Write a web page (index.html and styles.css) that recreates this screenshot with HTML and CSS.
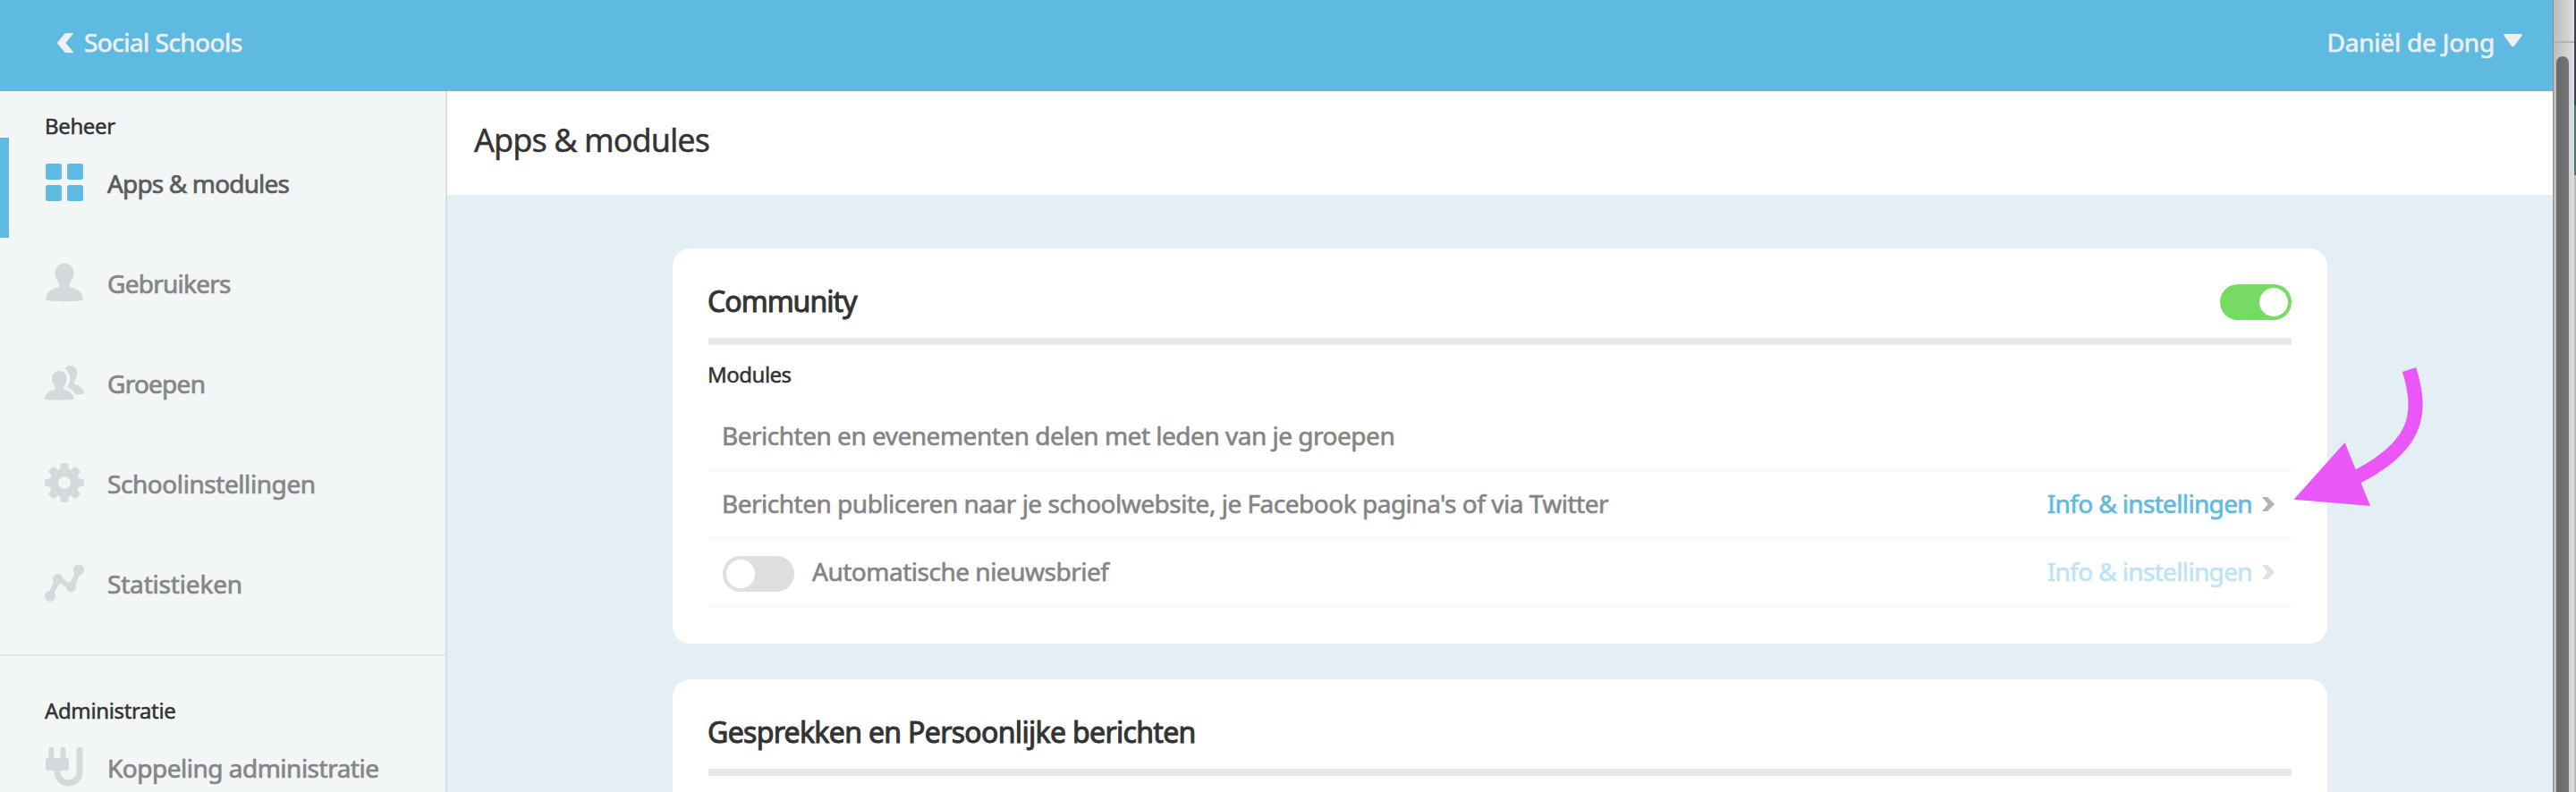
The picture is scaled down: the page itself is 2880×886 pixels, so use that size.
FILE: index.html
```
<!DOCTYPE html>
<html lang="nl">
<head>
  <meta charset="UTF-8">
  <title>Apps &amp; modules - Social Schools</title>
  <link rel="stylesheet" href="styles.css">
</head>
<body>

<div class="screen">
<div class="window">
  <!-- Top bar -->
  <header class="topbar">
    <a class="back">
      <svg class="back-icon" width="18" height="22" viewBox="0 0 18 22"><path d="M10 0h7.500q1 0 .3.800L9.500 11l8.500 10.200q.5.800-.5.800H10Q9 22 8 21L.5 12q-.8-1 0-2L8 1q1-1 2-1z"/></svg>
      <span class="back-text">Social Schools</span>
    </a>
    <div class="user">
      <span class="user-name">Daniël de Jong</span>
      <svg class="user-caret" width="21" height="15" viewBox="0 0 21 15"><path d="M1.500 0h18q1.800.6.8 2L12 13.500q-1.500 1.500-3 0L.5 2Q-.3.600 1.500 0z"/></svg>
    </div>
  </header>

  <div class="body">
    <!-- Sidebar -->
    <nav class="sidebar">
      <h3 class="group-title beheer">Beheer</h3>
      <a class="item active">
        <svg class="item-icon" width="44" height="44" viewBox="0 0 44 44">
          <rect x="1" y="1" width="18" height="18" rx="3"/><rect x="25" y="1" width="18" height="18" rx="3"/>
          <rect x="1" y="25" width="18" height="18" rx="3"/><rect x="25" y="25" width="18" height="18" rx="3"/>
        </svg>
        <span class="t-apps">Apps &amp; modules</span>
      </a>
      <a class="item">
        <svg class="item-icon" width="44" height="44" viewBox="0 0 44 44"><path d="M22 .5c6 0 10.300 4.500 10.300 10.500 0 5-2 8.500-4 11.500-1.500 2.500-1.300 3.800.7 4.800 6.500 2 12.500 4.700 13.800 12.200.3 2-.3 2.500-2.300 2.800-10 1.200-27 1.200-37 0-2-.3-2.600-.8-2.300-2.800 1.300-7.500 7.300-10.200 13.800-12.200 2-1 2.200-2.300.7-4.800-2-3-4-6.500-4-11.500C11.700 5 16 .5 22 .5z"/></svg>
        <span class="t-gebruikers">Gebruikers</span>
      </a>
      <a class="item">
        <svg class="item-icon" width="44" height="44" viewBox="0 0 44 44">
          <path d="M16.300 9c4.800 0 8.200 3.500 8.200 8.200 0 4-1.500 6.500-3 9-1.300 2-1.100 3.100.6 3.900 5 1.600 9.500 3.600 10.300 9 .2 1.300-.3 1.700-1.700 1.900-8 .7-21 .7-29 0-1.400-.2-1.800-.6-1.600-1.900.9-5.400 5.400-7.400 10.400-9 1.700-.8 1.900-1.900.6-3.900-1.500-2.500-3-5-3-9C8.100 12.500 11.500 9 16.300 9z"/>
          <path d="M22.500 6.500C24 4.200 26 3 28.300 3c4.700 0 7.900 3.500 7.900 8.200 0 4-1.200 6-2.700 8.700-1.200 2.300-.8 3.300.9 4 5 1.500 8.800 4.500 9.500 9 .1 1.400-.4 1.900-1.900 2.100h-6.500c-1.500-.1-2-1.300-3-2.700-2-2.500-4.500-4-7.500-5 2.500-3.300 3.300-6 3.300-9.800 0-4.500-2-8.500-5.800-11z"/>
        </svg>
        <span class="t-groepen">Groepen</span>
      </a>
      <a class="item">
        <svg class="item-icon" width="44" height="44" viewBox="0 0 44 44">
          <g class="gear-teeth">
            <path id="tooth" d="M20 0h4q2 0 2.300 2l.8 4.500 3 3H14l3-3L17.700 2Q18 0 20 0z"/>
            <use href="#tooth" transform="rotate(45 22 22)"/><use href="#tooth" transform="rotate(90 22 22)"/>
            <use href="#tooth" transform="rotate(135 22 22)"/><use href="#tooth" transform="rotate(180 22 22)"/>
            <use href="#tooth" transform="rotate(225 22 22)"/><use href="#tooth" transform="rotate(270 22 22)"/>
            <use href="#tooth" transform="rotate(315 22 22)"/>
          </g>
          <circle class="gear-ring" cx="22" cy="22" r="11.500"/>
        </svg>
        <span class="t-school">Schoolinstellingen</span>
      </a>
      <a class="item">
        <svg class="item-icon" width="44" height="44" viewBox="0 0 44 44">
          <path class="chart-line" d="M6 37L15 17.500L29.500 27L38 8"/>
          <circle cx="6" cy="37" r="6"/><circle cx="14.700" cy="17.700" r="5.700"/><circle cx="29.500" cy="26.500" r="5.700"/><circle cx="38" cy="7.500" r="6"/>
        </svg>
        <span class="t-stat">Statistieken</span>
      </a>
      <hr class="divider">
      <h3 class="group-title administratie">Administratie</h3>
      <a class="item">
        <svg class="item-icon" width="44" height="44" viewBox="0 0 44 44">
          <path class="plug-prong" d="M7.300 3v12M20.500 3v12"/>
          <rect x="1" y="12" width="26" height="14" rx="3"/>
          <path class="plug-cable" d="M14 24v3.500a12.500 12.500 0 0 0 25 0V3.500"/>
        </svg>
        <span class="t-koppeling">Koppeling administratie</span>
      </a>
    </nav>

    <!-- Content -->
    <main class="main">
      <div class="page-title"><h1>Apps &amp; modules</h1></div>
      <div class="cards">
        <section class="card">
          <div class="card-head">
            <h2 class="t-community">Community</h2>
            <span class="toggle on"></span>
          </div>
          <h3 class="modules">Modules</h3>
          <div class="row">
            <span class="label">Berichten en evenementen delen met leden van je groepen</span>
          </div>
          <div class="row">
            <span class="label">Berichten publiceren naar je schoolwebsite, je Facebook pagina's of via Twitter</span>
            <a class="info"><span class="info-text">Info &amp; instellingen</span><svg class="info-icon" width="14" height="16" viewBox="0 0 14 16"><path d="M0 0h5.500q.8 0 1.300.7L14 8l-7.200 7.300q-.5.700-1.300.7H0l6.500-8z"/></svg></a>
          </div>
          <div class="row">
            <span class="toggle"></span>
            <span class="label">Automatische nieuwsbrief</span>
            <a class="info disabled"><span class="info-text">Info &amp; instellingen</span><svg class="info-icon" width="14" height="16" viewBox="0 0 14 16"><path d="M0 0h5.500q.8 0 1.300.7L14 8l-7.200 7.300q-.5.700-1.300.7H0l6.500-8z"/></svg></a>
          </div>
        </section>
        <section class="card">
          <div class="card-head">
            <h2 class="t-gesprekken">Gesprekken en Persoonlijke berichten</h2>
          </div>
        </section>
      </div>
    </main>
  </div>
</div>

<!-- Window edge with scrollbar -->
<div class="edge">
  <div class="track">
    <div class="track-top"></div>
    <div class="thumb"></div>
  </div>
  <div class="behind"></div>
</div>

<!-- Pointer to the settings link -->
<svg class="arrow" width="150" height="160" viewBox="2562 410 150 160">
  <path class="arrow-line" d="M2693.500 413.500C2709 462 2704 500 2630 536"/>
  <path class="arrow-head" d="M2564.500 558.700L2621.600 495L2650 566z"/>
</svg>
</div>

</body>
</html>
```

FILE: styles.css
```
* {
  box-sizing: border-box;
}
body {
  margin: 0;
  font-family: "Noto Sans", "Open Sans", sans-serif;
  font-size: 28px;
  color: #333;
}
h1, h2, h3 {
  margin: 0;
  font-weight: 400;
}
span, h1, h2, h3 {
  white-space: nowrap;
}
svg {
  flex: none;
}
.screen {
  position: relative;
  display: flex;
  width: 2880px;
  height: 886px;
  overflow: hidden;
}
.window {
  width: 2854px;
  display: flex;
  flex-direction: column;
}

/* Top bar */
.topbar {
  flex: none;
  height: 102px;
  padding: 0 34px 0 64px;
  background-color: #5fbae2;
  color: #ecf0f1;
  fill: #ecf0f1;
  display: flex;
  justify-content: space-between;
}
.back, .user {
  display: flex;
  height: 96px;
  align-items: center;
  -webkit-text-stroke: 0.7px;
}
.back-text {
  margin: -2px 0 0 12px;
  letter-spacing: -0.52px;
}
.user-name {
  margin-top: -2px;
  letter-spacing: -0.2px;
}
.user-caret {
  margin: -6px 0 0 10px;
}

/* Sidebar */
.body {
  flex: 1;
  min-height: 0;
  display: flex;
}
.sidebar {
  width: 500px;
  background-color: #f2f6f7;
  border-right: 2px solid #dcdede;
}
.group-title {
  height: 52px;
  padding-left: 50px;
  font-size: 24px;
  line-height: 52px;
  letter-spacing: -0.37px;
  -webkit-text-stroke: 0.5px;
}
.beheer {
  margin-top: 13px;
  margin-bottom: -13px;
}
.item {
  display: flex;
  align-items: flex-start;
  height: 112px;
  padding: 28px 0 0 50px;
  color: #868686;
  fill: #d4d9dc;
}
.item span {
  margin-left: 26px;
  line-height: 46px;
  -webkit-text-stroke: 0.7px;
}
.item.active {
  color: #5c5c5c;
  fill: #5fbae2;
  border-left: 10px solid #5fbae2;
  padding-left: 40px;
}
.t-apps {
  letter-spacing: -0.85px;
}
.t-gebruikers, .t-groepen {
  letter-spacing: -0.75px;
}
.t-school {
  letter-spacing: -0.43px;
}
.t-stat {
  letter-spacing: -0.18px;
}
.t-koppeling {
  letter-spacing: -0.5px;
}
.gear-ring {
  fill: none;
  stroke: #d4d9dc;
  stroke-width: 9;
}
.chart-line {
  fill: none;
  stroke: #d4d9dc;
  stroke-width: 6;
}
.plug-prong {
  stroke: #d4d9dc;
  stroke-width: 6;
  stroke-linecap: round;
}
.plug-cable {
  fill: none;
  stroke: #d4d9dc;
  stroke-width: 7;
  stroke-linecap: round;
}
.divider {
  height: 2px;
  margin: 18px 0 0;
  border: 0;
  background-color: #e2e4e5;
}
.administratie {
  margin-top: 35px;
  margin-bottom: -13px;
}

/* Content */
.main {
  flex: 1;
  background-color: #e4eff5;
}
.page-title {
  height: 116px;
  padding-left: 30px;
  background-color: #fff;
}
.page-title h1 {
  font-size: 36px;
  line-height: 110px;
  letter-spacing: -0.95px;
  -webkit-text-stroke: 0.4px;
}
.cards {
  padding: 60px 252px 0;
}
.card {
  height: 442px;
  margin-bottom: 40px;
  padding: 0 40px;
  border-radius: 20px;
  background-color: #fff;
}
.card-head {
  display: flex;
  align-items: center;
  justify-content: space-between;
  height: 108px;
  padding-top: 20px;
  border-bottom: 8px solid #e8e8e8;
}
.card-head h2 {
  margin: -3px 0 0 -1px;
  font-size: 32px;
  line-height: 80px;
  -webkit-text-stroke: 1px;
}
.t-community {
  letter-spacing: -0.95px;
}
.t-gesprekken {
  letter-spacing: -0.67px;
}
.modules {
  height: 66px;
  margin-left: -1px;
  font-size: 24px;
  line-height: 66px;
  letter-spacing: -0.5px;
  -webkit-text-stroke: 0.5px;
}
.row {
  display: flex;
  align-items: center;
  height: 76px;
  padding: 0 19px 0 16px;
  border-bottom: 4px solid #f8f8f8;
  color: #848484;
}
.label {
  margin: -2px 0 0 -1px;
  letter-spacing: -0.49px;
  -webkit-text-stroke: 0.6px;
}
.info {
  display: flex;
  align-items: center;
  margin-left: auto;
  color: #5fbae2;
  fill: #b3b3b3;
}
.info-text {
  margin-top: -2px;
  letter-spacing: -0.65px;
  -webkit-text-stroke: 0.7px;
}
.info-icon {
  margin-left: 11px;
}
.info.disabled {
  opacity: 0.4;
}

/* Switch */
.toggle {
  display: flex;
  width: 80px;
  height: 40px;
  padding: 4px;
  border-radius: 20px;
  background-color: #dfdfdf;
}
.toggle::before {
  content: "";
  width: 32px;
  height: 32px;
  border-radius: 50%;
  background-color: #fff;
}
.toggle.on {
  justify-content: flex-end;
  background-color: #76db62;
}
.row .toggle {
  margin: 4px 21px 0 0;
}

/* Window edge */
.edge {
  flex: none;
  display: flex;
  width: 26px;
}
.track {
  display: flex;
  flex-direction: column;
  width: 24px;
  padding: 0 6px 0 3px;
  border-left: 1px solid #8c8c8c;
  background: linear-gradient(90deg, #bcbcbc, #dedede);
}
.track-top {
  flex: none;
  height: 48px;
  margin: 0 -6px 15px -3px;
  border-bottom: 2px solid #b4b4b4;
}
.thumb {
  flex: 1;
  border-radius: 7px 7px 0 0;
  background: linear-gradient(90deg, #68696b, #747476);
}
.behind {
  width: 2px;
  background: linear-gradient(#2b4657 118px, #4a7286 118px, #4a7286 196px, #b9b9b9 196px);
}

/* Pointer */
.arrow {
  position: absolute;
  left: 2562px;
  top: 410px;
}
.arrow-line {
  fill: none;
  stroke: #ea56f8;
  stroke-width: 16;
}
.arrow-head {
  fill: #ea56f8;
}
```
